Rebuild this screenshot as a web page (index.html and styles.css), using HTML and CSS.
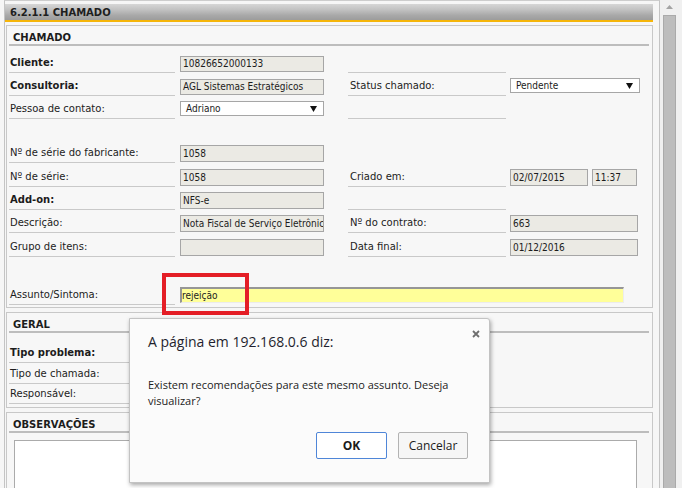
FILE: index.html
```html
<!DOCTYPE html>
<html lang="pt-BR">
<head>
<meta charset="utf-8">
<title>6.2.1.1 Chamado</title>
<link rel="stylesheet" href="styles.css">
</head>
<body>
<div class="screen">
  <main class="main">
    <div class="hdr">6.2.1.1 CHAMADO</div>

    <section class="box box-chamado">
      <h2 class="sec-title">CHAMADO</h2>
      <div class="form form-chamado">
        <div class="lbl b">Cliente:</div>
        <div class="fld"><div class="inp">10826652000133</div></div>
        <div class="lbl r"></div>
        <div class="fld r"></div>

        <div class="lbl b">Consultoria:</div>
        <div class="fld"><div class="inp">AGL Sistemas Estratégicos</div></div>
        <div class="lbl r">Status chamado:</div>
        <div class="fld r"><div class="sel sel-status"><span>Pendente</span><svg class="caret" width="7" height="6" viewBox="0 0 7 6"><path d="M0 0H7L3.5 6Z"/></svg></div></div>

        <div class="lbl">Pessoa de contato:</div>
        <div class="fld"><div class="sel"><span>Adriano</span><svg class="caret" width="7" height="6" viewBox="0 0 7 6"><path d="M0 0H7L3.5 6Z"/></svg></div></div>
        <div class="lbl r"></div>
        <div class="fld r"></div>

        <div class="spacer"></div>

        <div class="lbl">Nº de série do fabricante:</div>
        <div class="fld"><div class="inp tall">1058</div></div>
        <div class="cell"></div>
        <div class="fld r"></div>

        <div class="lbl">Nº de série:</div>
        <div class="fld"><div class="inp tall">1058</div></div>
        <div class="lbl r">Criado em:</div>
        <div class="fld r"><div class="inp tall date">02/07/2015</div><div class="inp tall time">11:37</div></div>

        <div class="lbl b">Add-on:</div>
        <div class="fld"><div class="inp tall">NFS-e</div></div>
        <div class="lbl r"></div>
        <div class="fld r"></div>

        <div class="lbl">Descrição:</div>
        <div class="fld"><div class="inp tall">Nota Fiscal de Serviço Eletrônica</div></div>
        <div class="lbl r">Nº do contrato:</div>
        <div class="fld r"><div class="inp tall wide">663</div></div>

        <div class="lbl">Grupo de itens:</div>
        <div class="fld"><div class="inp tall"></div></div>
        <div class="lbl r">Data final:</div>
        <div class="fld r"><div class="inp tall wide">01/12/2016</div></div>

        <div class="spacer"></div>

        <div class="lbl">Assunto/Sintoma:</div>
        <div class="fld span3"><div class="inp-yellow">rejeição</div></div>
      </div>
    </section>

    <section class="box box-geral">
      <h2 class="sec-title">GERAL</h2>
      <div class="form form-geral">
        <div class="lbl b">Tipo problema:</div>
        <div class="fld"></div>
        <div class="cell"></div>
        <div class="fld r"></div>

        <div class="lbl">Tipo de chamada:</div>
        <div class="fld"></div>
        <div class="cell"></div>
        <div class="fld r"></div>

        <div class="lbl">Responsável:</div>
        <div class="fld"></div>
        <div class="cell"></div>
        <div class="fld r"></div>
      </div>
    </section>

    <section class="box box-obs">
      <h2 class="sec-title">OBSERVAÇÕES</h2>
      <div class="obs"></div>
    </section>
  </main>

  <div class="vscroll">
    <svg class="vs-arrow" width="7" height="4" viewBox="0 0 7 4"><path d="M0 4L3.5 0L7 4Z"/></svg>
    <div class="vs-thumb"></div>
  </div>
</div>

<div class="highlight"></div>

<div class="dialog" role="dialog">
  <div class="dlg-head">
    <div class="dlg-title">A página em 192.168.0.6 diz:</div>
    <svg class="dlg-close" width="8" height="8" viewBox="0 0 8 8"><path d="M1 1L7 7M7 1L1 7"/></svg>
  </div>
  <div class="dlg-msg">Existem recomendações para este mesmo assunto. Deseja<br>visualizar?</div>
  <div class="dlg-btns">
    <button class="btn btn-ok">OK</button>
    <button class="btn btn-cancel">Cancelar</button>
  </div>
</div>
</body>
</html>
```

FILE: styles.css
```css
* { box-sizing: border-box; }
html, body { margin: 0; padding: 0; }
body {
  width: 682px;
  height: 488px;
  overflow: hidden;
  position: relative;
  background: #f6f6f6;
  font-family: "DejaVu Sans", Verdana, sans-serif;
  font-size: 10px;
  color: #1c1c1c;
}
.screen { display: flex; height: 488px; }

.main {
  width: 656px;
  height: 488px;
  margin-left: 4px;
  border-left: 1px solid #c4c4c4;
  border-right: 1px solid #c4c4c4;
  border-top: 1px solid #cdcdcd;
  padding-top: 3px;
  overflow: hidden;
  flex: none;
}

.hdr {
  margin-right: 6px;
  height: 18px;
  padding: 3px 0 0 5px;
  line-height: 12px;
  font-weight: bold;
  color: #1e1e1e;
  background: linear-gradient(#d6d6d6 0%, #c2c2c2 35%, #a9a9a9 70%, #9c9c9c 100%);
  border-bottom: 2px solid #f5b50a;
}

.box {
  margin: 3px 6px 0 1px;
  border: 1px solid #c8c8c8;
  background: #f7f7f7;
}
.box-geral, .box-obs { margin-top: 4px; }
.box-chamado { padding-bottom: 2px; }
.box-geral { padding-bottom: 3px; }
.box-obs { height: 90px; }

.sec-title {
  margin: 0 3px 0 2px;
  padding: 6px 0 0 4px;
  line-height: 12px;
  font-size: 10px;
  font-weight: bold;
  color: #1c1c1c;
  border-bottom: 2px solid #bdbdbd;
}

.form {
  display: grid;
  grid-template-columns: 166px 173px 158px 1fr;
  margin: 4px 0 0 2px;
}
.form-chamado {
  grid-template-rows: 23px 23px 23px 21px 23px 24px 23px 23px 24px 24px 24px;
}
.form-geral {
  grid-template-rows: 26px 21px 20px;
}

.lbl {
  display: flex;
  align-items: flex-end;
  padding: 0 0 3px 1px;
  line-height: 12px;
  border-bottom: 1px solid #c9c9c9;
  white-space: nowrap;
}
.lbl.r { padding-left: 2px; }
.lbl.b { font-weight: bold; }

.spacer { grid-column: 1 / -1; }

.fld {
  display: flex;
  align-items: flex-end;
  padding: 0 0 1px 5px;
}
.fld.r { padding-left: 4px; }
.fld.span3 { grid-column: 2 / 5; padding-bottom: 2px; }

.inp {
  width: 144px;
  height: 16px;
  border: 1px solid #a6a6a6;
  background: #ebeae4;
  padding: 0 2px;
  line-height: 14px;
  font-family: "DejaVu Sans Condensed", "DejaVu Sans", sans-serif;
  font-stretch: condensed;
  font-size: 10px;
  color: #1c1c1c;
  white-space: nowrap;
  overflow: hidden;
}
.inp.tall { height: 17px; line-height: 15px; }
.inp.date { width: 78px; }
.inp.time { width: 45px; margin-left: 4px; }
.inp.wide { width: 128px; }

.sel {
  width: 144px;
  height: 15px;
  margin-bottom: 2px;
  border: 1px solid #a6a6a6;
  background: #fff;
  padding: 0 6px 0 5px;
  display: flex;
  align-items: center;
  justify-content: space-between;
  font-family: "DejaVu Sans Condensed", "DejaVu Sans", sans-serif;
  font-stretch: condensed;
  font-size: 10px;
  line-height: 13px;
  color: #1c1c1c;
}
.sel-status { width: 130px; }
.caret { fill: #111; flex: none; }

.inp-yellow {
  width: 444px;
  height: 16px;
  background: #ffff99;
  border-top: 2px solid #969696;
  border-left: 2px solid #969696;
  border-right: 1px solid #ececec;
  border-bottom: 1px solid #ececec;
  padding: 0;
  line-height: 13px;
  font-family: "DejaVu Sans Condensed", "DejaVu Sans", sans-serif;
  font-stretch: condensed;
  font-size: 10px;
  color: #1c1c1c;
}

.obs {
  margin: 7px 0 0 7px;
  width: 623px;
  height: 70px;
  background: #fff;
  border: 1px solid #ababab;
}

.vscroll {
  width: 22px;
  height: 488px;
  flex: none;
  background: #f0f0f0;
  padding: 5px 0 0 3px;
}
.vs-arrow { display: block; margin-left: 3px; fill: #a3a3a3; }
.vs-thumb {
  margin-top: 6px;
  width: 13px;
  height: 480px;
  background: #bdbdbd;
  border: 1px solid #aaaaaa;
}

.highlight {
  position: absolute;
  left: 162px;
  top: 273px;
  width: 87px;
  height: 42px;
  border: 4px solid #e41e26;
}

.dialog {
  position: absolute;
  left: 129px;
  top: 318px;
  width: 361px;
  height: 165px;
  background: #fbfbfb;
  border: 1px solid #c3c3c3;
  border-radius: 0 3px 0 0;
  box-shadow: 1px 2px 4px rgba(0, 0, 0, 0.35);
  font-family: "Open Sans", "Noto Sans", sans-serif;
  color: #1b1b1b;
}
.dlg-head {
  display: flex;
  justify-content: space-between;
  align-items: flex-start;
  padding: 13px 9px 0 18px;
}
.dlg-title {
  font-size: 14px;
  line-height: 19px;
  color: #1f1f2e;
}
.dlg-close {
  margin-top: -2px;
  stroke: #6e6e6e;
  stroke-width: 1.8;
}
.dlg-msg {
  margin-top: 26px;
  padding-left: 18px;
  font-size: 11px;
  line-height: 16px;
  color: #1b1b1b;
}
.dlg-btns {
  display: flex;
  justify-content: flex-end;
  gap: 11px;
  margin-top: 23px;
  padding-right: 21px;
}
.btn {
  height: 27px;
  font-family: "Open Sans", "Noto Sans", sans-serif;
  font-size: 12px;
  border-radius: 2px;
  padding: 0;
  color: #1b1b1b;
}
.btn-ok {
  width: 71px;
  background: #fff;
  border: 1px solid #4f86d8;
  font-weight: bold;
}
.btn-cancel {
  width: 70px;
  background: #f6f6f6;
  border: 1px solid #b3b3b3;
}
```
